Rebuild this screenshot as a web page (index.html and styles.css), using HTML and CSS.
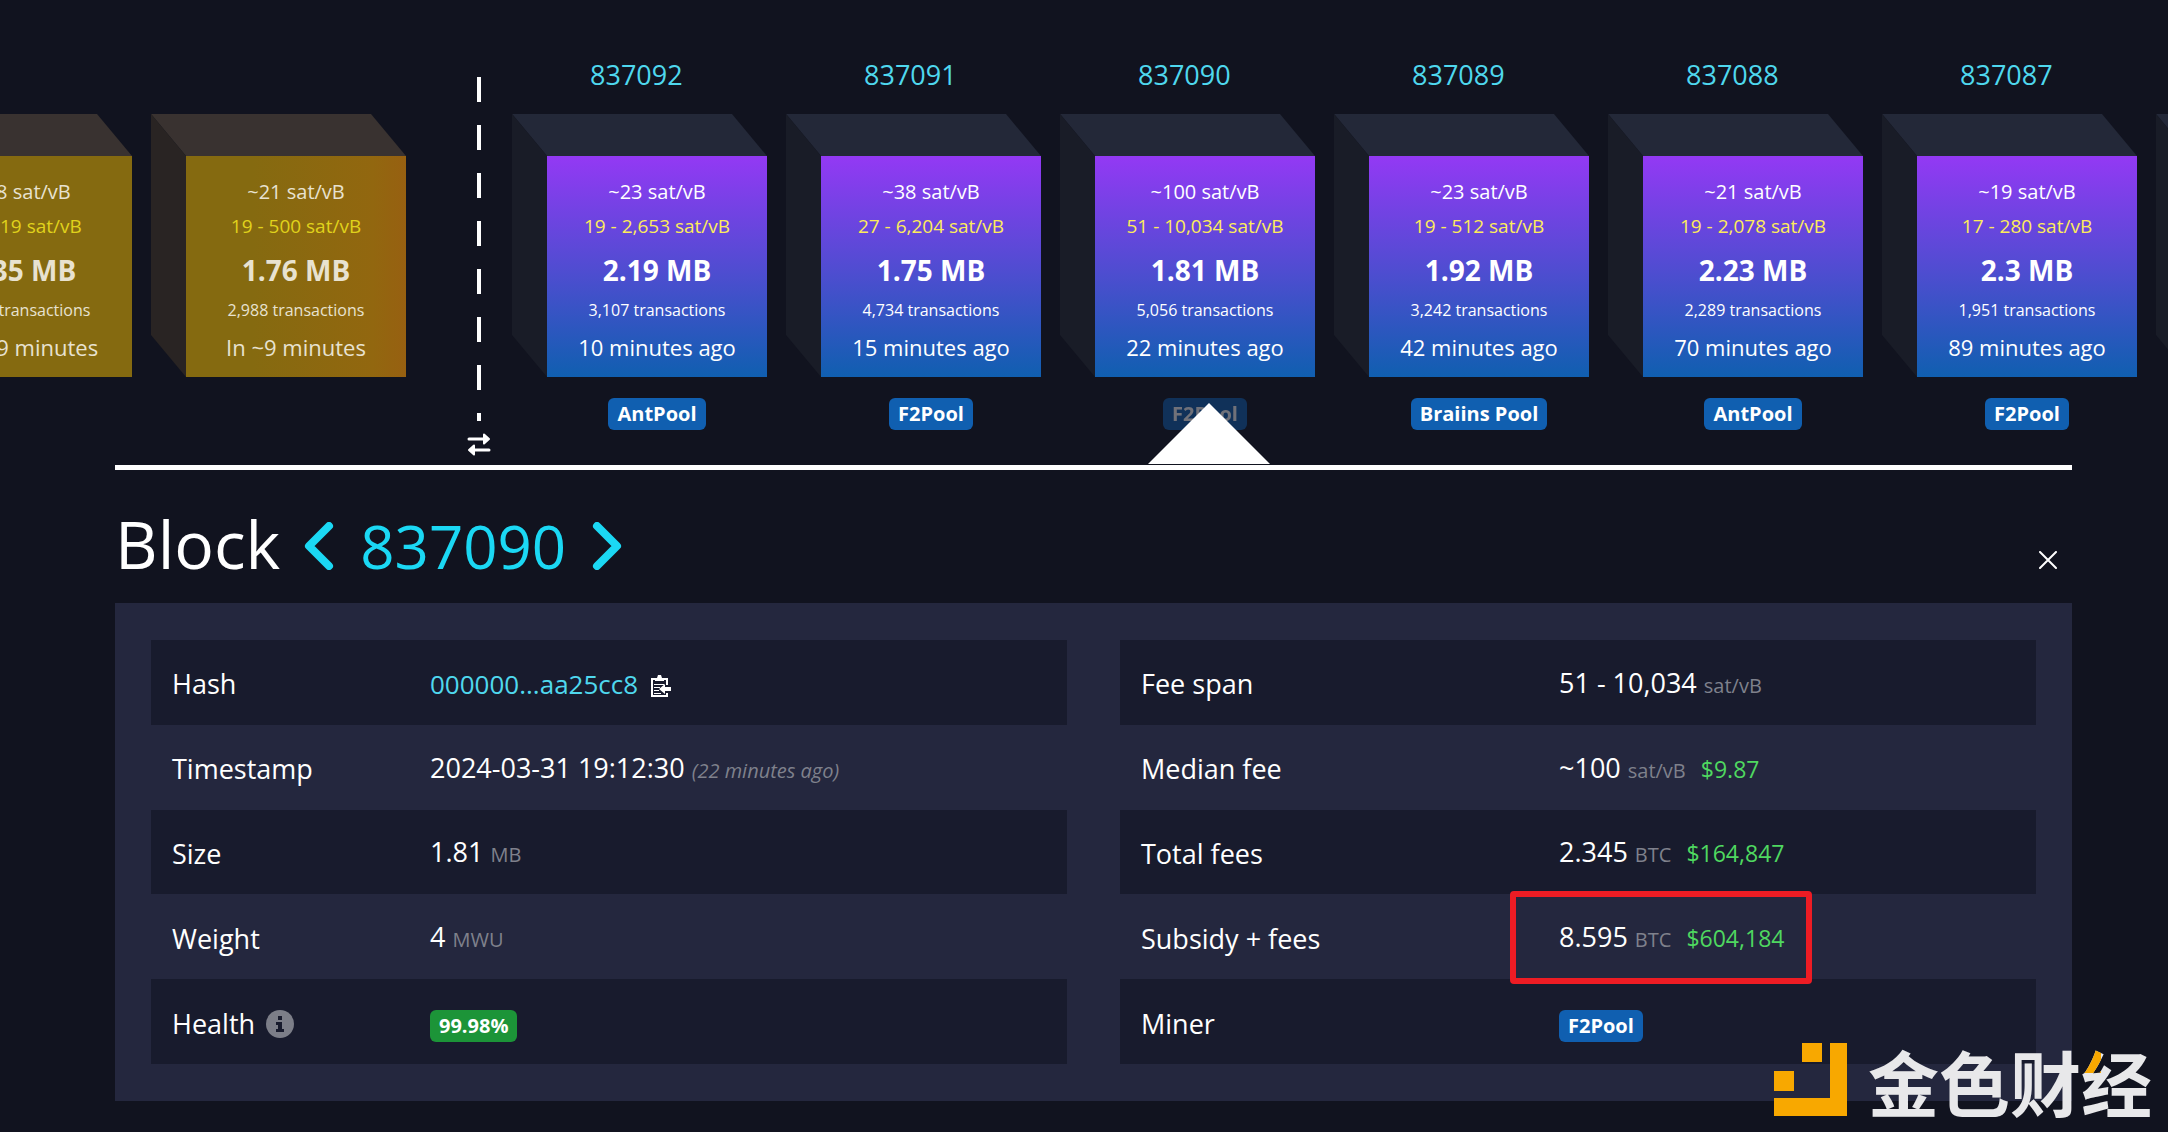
FILE: index.html
```html
<!DOCTYPE html>
<html lang="en">
<head>
<meta charset="utf-8">
<title>Block 837090</title>
<meta name="viewport" content="width=device-width, initial-scale=1">
<link rel="stylesheet" href="styles.css">
</head>
<body>
<section class="chain" aria-label="Blockchain">
  <div class="pending">
    <article class="block mempool">
      <div class="face"><p class="rate">~18 sat/vB</p><p class="range">18 - 19 sat/vB</p><p class="size">1.35 MB</p><p class="count">2,535 transactions</p><p class="age">In ~19 minutes</p></div>
    </article>
    <article class="block mempool next">
      <div class="face"><p class="rate">~21 sat/vB</p><p class="range">19 - 500 sat/vB</p><p class="size">1.76 MB</p><p class="count">2,988 transactions</p><p class="age">In ~9 minutes</p></div>
    </article>
  </div>
  <div class="divider">
    <div class="dashes"></div>
    <button class="swap" type="button" aria-label="Change direction">
      <svg viewBox="0 0 24 23" width="24" height="23"><path d="M2 6h15M22 17H7" stroke="#fff" stroke-width="3" stroke-linecap="round"/><path d="M17 1.500l5 4.500-5 4.500zM7 12.500l-5 4.500 5 4.500z" fill="#fff" stroke="#fff" stroke-width="2" stroke-linejoin="round"/></svg>
    </button>
  </div>
  <div class="mined">
    <article class="block">
      <a class="height" href="#837092">837092</a>
      <div class="face"><p class="rate">~23 sat/vB</p><p class="range">19 - 2,653 sat/vB</p><p class="size">2.19 MB</p><p class="count">3,107 transactions</p><p class="age">10 minutes ago</p></div>
      <a class="badge" href="#antpool">AntPool</a>
    </article>
    <article class="block">
      <a class="height" href="#837091">837091</a>
      <div class="face"><p class="rate">~38 sat/vB</p><p class="range">27 - 6,204 sat/vB</p><p class="size">1.75 MB</p><p class="count">4,734 transactions</p><p class="age">15 minutes ago</p></div>
      <a class="badge" href="#f2pool">F2Pool</a>
    </article>
    <article class="block current">
      <a class="height" href="#837090">837090</a>
      <div class="face"><p class="rate">~100 sat/vB</p><p class="range">51 - 10,034 sat/vB</p><p class="size">1.81 MB</p><p class="count">5,056 transactions</p><p class="age">22 minutes ago</p></div>
      <a class="badge" href="#f2pool">F2Pool</a>
    </article>
    <article class="block">
      <a class="height" href="#837089">837089</a>
      <div class="face"><p class="rate">~23 sat/vB</p><p class="range">19 - 512 sat/vB</p><p class="size">1.92 MB</p><p class="count">3,242 transactions</p><p class="age">42 minutes ago</p></div>
      <a class="badge" href="#braiins">Braiins Pool</a>
    </article>
    <article class="block">
      <a class="height" href="#837088">837088</a>
      <div class="face"><p class="rate">~21 sat/vB</p><p class="range">19 - 2,078 sat/vB</p><p class="size">2.23 MB</p><p class="count">2,289 transactions</p><p class="age">70 minutes ago</p></div>
      <a class="badge" href="#antpool">AntPool</a>
    </article>
    <article class="block">
      <a class="height" href="#837087">837087</a>
      <div class="face"><p class="rate">~19 sat/vB</p><p class="range">17 - 280 sat/vB</p><p class="size">2.3 MB</p><p class="count">1,951 transactions</p><p class="age">89 minutes ago</p></div>
      <a class="badge" href="#f2pool">F2Pool</a>
    </article>
    <article class="block"><div class="face"></div></article>
  </div>
</section>

<main class="details">
  <header class="title">
    <h1>Block</h1>
    <a class="arrow" href="#837089" aria-label="Previous block"><svg viewBox="0 0 30 48" width="30" height="48"><path d="M25 4L5 24l20 20" fill="none" stroke="#1bd8f4" stroke-width="8" stroke-linecap="round" stroke-linejoin="round"/></svg></a>
    <a class="number" href="#837090">837090</a>
    <a class="arrow" href="#837091" aria-label="Next block"><svg viewBox="0 0 30 48" width="30" height="48"><path d="M5 4l20 20L5 44" fill="none" stroke="#1bd8f4" stroke-width="8" stroke-linecap="round" stroke-linejoin="round"/></svg></a>
    <button class="close" type="button" aria-label="Close"><svg viewBox="0 0 18 18" width="18" height="18"><path d="M1 1l16 16M17 1L1 17" stroke="#fff" stroke-width="2" stroke-linecap="round"/></svg></button>
  </header>
  <div class="panel">
    <table class="facts left">
      <tr><th scope="row">Hash</th><td><a class="link" href="#hash">000000...aa25cc8</a><button class="copy" type="button" aria-label="Copy hash"><svg viewBox="0 0 22 24" width="22" height="24"><path d="M17 11V5H2v17h15v-3" fill="none" stroke="#fff" stroke-width="2"/><path d="M5 7V4h2l1-3h3l1 3h2v3z" fill="#fff"/><path d="M4 10.500h10M4 13.500h6M4 16.500h5M4 19.500h7" stroke="#fff"/><path d="M9 15l6-5v3h6v4h-6v3z" fill="#fff"/></svg></button></td></tr>
      <tr><th scope="row">Timestamp</th><td>2024-03-31 19:12:30 <i class="unit">(22 minutes ago)</i></td></tr>
      <tr><th scope="row">Size</th><td>1.81 <span class="unit">MB</span></td></tr>
      <tr><th scope="row">Weight</th><td>4 <span class="unit">MWU</span></td></tr>
      <tr><th scope="row">Health <svg class="info" viewBox="0 0 28 28" width="28" height="28"><circle cx="14" cy="14" r="14" fill="#7c7e88"/><path d="M12 6h4v4h-4zM10 12h6v7h2v3h-8v-3h2v-4h-2z" fill="#181b2d"/></svg></th><td><span class="badge good">99.98%</span></td></tr>
    </table>
    <table class="facts right">
      <tr><th scope="row">Fee span</th><td>51 - 10,034 <span class="unit">sat/vB</span></td></tr>
      <tr><th scope="row">Median fee</th><td>~100 <span class="unit">sat/vB</span> <span class="fiat">$9.87</span></td></tr>
      <tr><th scope="row">Total fees</th><td>2.345 <span class="unit">BTC</span> <span class="fiat">$164,847</span></td></tr>
      <tr><th scope="row">Subsidy + fees</th><td><div class="marked">8.595 <span class="unit">BTC</span> <span class="fiat">$604,184</span></div></td></tr>
      <tr><th scope="row">Miner</th><td><a class="badge" href="#f2pool">F2Pool</a></td></tr>
    </table>
  </div>
</main>

<div class="watermark">
  <svg viewBox="0 0 73 73" width="73" height="73"><path d="M28 0h20v19H28zM0 28h20v20H0zM56 0h17v73H0V55h56z" fill="#f8a800"/></svg>
  <span lang="zh-CN">金色财<span class="accent">经</span></span>
</div>
</body>
</html>
```

FILE: styles.css
```css
*, *::before, *::after { box-sizing: border-box; }
html { background: #11131f; overflow: hidden; }
body {
  margin: 0;
  position: relative;
  min-height: 100vh;
  overflow: hidden;
  color: #fff;
  background: #11131f;
  font: 27px/36px "Open Sans", "Noto Sans", sans-serif;
}
a { color: #4fd8ee; text-decoration: none; }
p { margin: 0; }
button { padding: 0; border: 0; background: none; line-height: 0; cursor: pointer; }

/* Chain of cubes */
.chain { display: flex; height: 465px; overflow: hidden; }
.pending, .mined { display: flex; gap: 54px; flex: none; }
.pending { width: 406px; justify-content: flex-end; }
.mined { padding-left: 31px; }
.block {
  position: relative;
  flex: none;
  width: 220px;
  padding-top: 156px;
  display: flex;
  flex-direction: column;
  align-items: center;
}
.block::before, .block::after { content: ""; position: absolute; left: -35px; top: 114px; }
.block::before { width: 255px; height: 42px; background: #232838; clip-path: polygon(0 0, 220px 0, 100% 100%, 35px 100%); }
.block::after { width: 35px; height: 263px; background: #191c27; clip-path: polygon(0 0, 100% 42px, 100% 100%, 0 221px); }
.mempool::before { background: #393230; }
.mempool::after { background: #292423; }
.face {
  width: 220px;
  height: 221px;
  padding-top: 18px;
  background: linear-gradient(#9339f4, #105fb0);
  text-align: center;
  white-space: nowrap;
}
.mempool .face { background: #856a10; color: #e8e2d0; }
.next .face { background: linear-gradient(to right, #856a10 30%, #92670f 85%, #976011); }
.height { position: absolute; top: 57px; left: 43px; }
.rate { font-size: 20px; }
.range { font-size: 19px; line-height: 32px; color: #fdec5a; }
.mempool .range { color: #e0d21c; }
.size { font-size: 28px; line-height: 56px; font-weight: 700; }
.count { font-size: 16px; line-height: 24px; }
.age { font-size: 22px; line-height: 50px; }
.badge {
  display: inline-block;
  padding: 0 9px;
  border-radius: 6px;
  background: #105fb0;
  color: #fff;
  font-size: 20px;
  line-height: 32px;
  font-weight: 700;
}
.block .badge { margin-top: 21px; }
.current .badge { opacity: .4; }

.divider {
  flex: none;
  width: 75px;
  margin-left: 35px;
  padding-top: 77px;
  display: flex;
  flex-direction: column;
  align-items: center;
  gap: 12px;
}
.dashes { width: 4px; height: 344px; background: repeating-linear-gradient(#fff 0 25px, transparent 25px 48px); }

/* Block details */
.details { position: relative; margin: 0 96px 0 115px; border-top: 5px solid #fff; }
.details::before {
  content: "";
  position: absolute;
  left: 1033px;
  top: -67px;
  width: 122px;
  height: 61px;
  background: #fff;
  clip-path: polygon(50% 0, 100% 100%, 0 100%);
}
.title { display: flex; align-items: center; height: 133px; padding: 18px 15px 0 0; }
h1 { margin: 0 24px 5px 0; font-size: 66px; line-height: 90px; font-weight: 400; }
.number { margin: 0 26px; font-size: 60px; line-height: 90px; color: #1bd8f4; }
.arrow { line-height: 0; }
.close { margin: 28px 0 0 auto; }
.panel { display: grid; grid-template-columns: 1fr 1fr; gap: 53px; padding: 37px 36px; background: #24273e; }
.facts { width: 100%; height: 424px; border-collapse: collapse; table-layout: fixed; }
.facts tr:nth-child(odd) { background: #181b2d; }
th, td { height: 84px; padding: 4px 0 0 21px; text-align: left; font-weight: 400; white-space: nowrap; }
.link { font-size: 26px; }
.left th { width: 258px; }
.right th { width: 418px; }
.unit { font-size: 20px; color: #7f818c; }
.fiat { margin-left: 8px; font-size: 23px; color: #4fd860; }
.copy { margin-left: 12px; vertical-align: -4px; }
.info { margin-left: 4px; vertical-align: -4px; }
.good { background: #1c9438; }
.marked { position: relative; }
.marked::after {
  content: "";
  position: absolute;
  left: -49px;
  top: -28px;
  width: 302px;
  height: 93px;
  border: 6px solid #ed1c24;
  border-radius: 4px;
}

.watermark {
  position: absolute;
  right: 16px;
  bottom: 16px;
  display: flex;
  align-items: center;
  gap: 21px;
  color: #e8e8ea;
  font: 700 71px/72px "Noto Sans CJK SC", sans-serif;
}
.accent {
  color: transparent;
  background: linear-gradient(#f8a800, #f8a800) 0 18px / 20px 26px no-repeat, #e8e8ea;
  background-clip: text;
  -webkit-background-clip: text;
}
```
